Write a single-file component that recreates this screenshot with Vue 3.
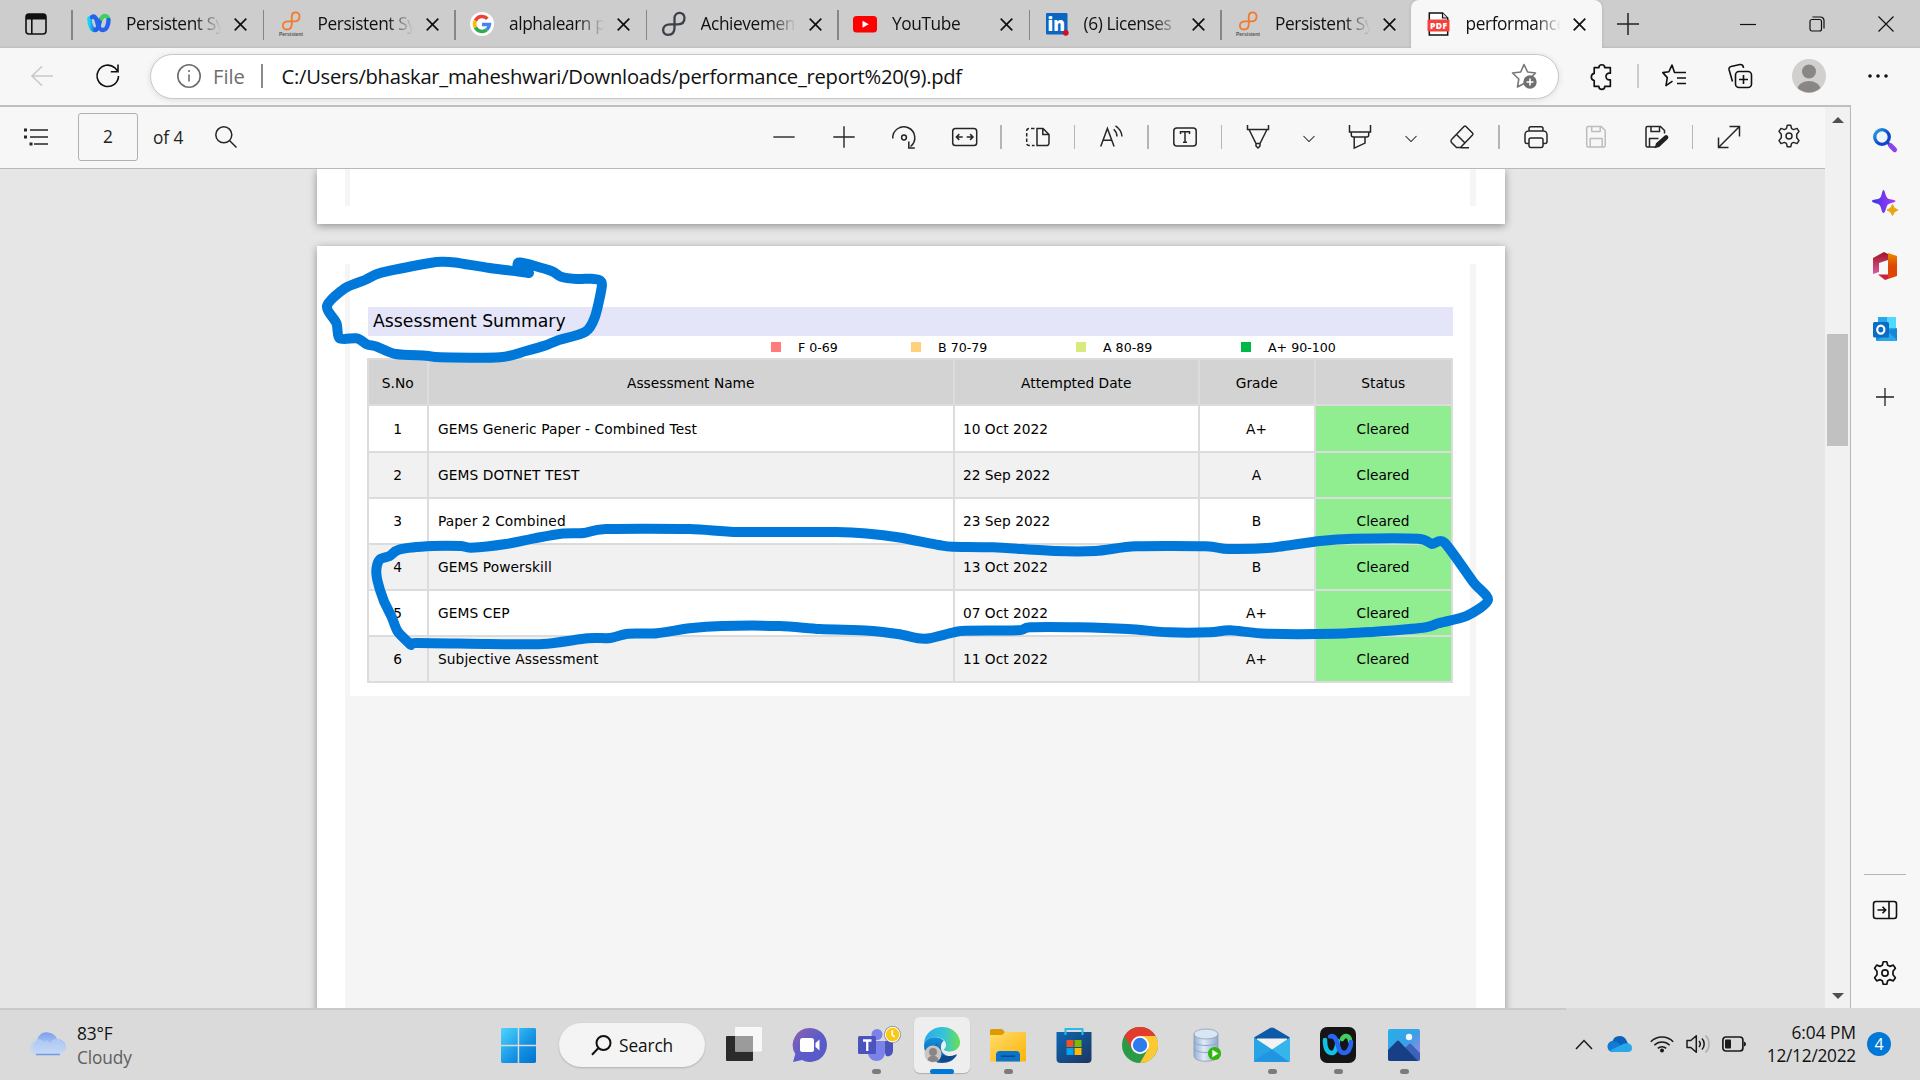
<script setup>
const tabs = [
  { title: 'Persistent Systems', icon: 'webex' },
  { title: 'Persistent Systems', icon: 'persistent' },
  { title: 'alphalearn persistent', icon: 'google' },
  { title: 'Achievements', icon: 'loop' },
  { title: 'YouTube', icon: 'youtube' },
  { title: '(6) Licenses', icon: 'linkedin' },
  { title: 'Persistent Systems', icon: 'persistent' },
  { title: 'performance_report', icon: 'pdf', active: true },
]

const tools = [
  'minus', 'plus', 'rotate', 'fit', '|', 'pageview', '|', 'readaloud', '|', 'addtext', '|',
  'pen', 'v', 'highlighter', 'v', 'eraser', '|', 'print', 'save', 'saveas', '|', 'expand', 'gear',
]

const legend = [
  { label: 'F 0-69', cls: 'red' },
  { label: 'B 70-79', cls: 'amber' },
  { label: 'A 80-89', cls: 'lime' },
  { label: 'A+ 90-100', cls: 'green' },
]

const rows = [
  ['1', 'GEMS Generic Paper - Combined Test', '10 Oct 2022', 'A+'],
  ['2', 'GEMS DOTNET TEST', '22 Sep 2022', 'A'],
  ['3', 'Paper 2 Combined', '23 Sep 2022', 'B'],
  ['4', 'GEMS Powerskill', '13 Oct 2022', 'B'],
  ['5', 'GEMS CEP', '07 Oct 2022', 'A+'],
  ['6', 'Subjective Assessment', '11 Oct 2022', 'A+'],
]

const apps = [
  { icon: 'taskview' },
  { icon: 'chat' },
  { icon: 'teams', open: true },
  { icon: 'edge', focused: true },
  { icon: 'explorer', open: true },
  { icon: 'store' },
  { icon: 'chrome' },
  { icon: 'database' },
  { icon: 'mail', open: true },
  { icon: 'webexapp', open: true },
  { icon: 'photos', open: true },
]

// Smooth pen stroke through a list of points (Catmull-Rom to Bezier)
function ink(points) {
  let d = `M${points[0][0]} ${points[0][1]}`
  for (let i = 0; i < points.length - 1; i++) {
    const a = points[i - 1] || points[i]
    const b = points[i]
    const c = points[i + 1]
    const e = points[i + 2] || c
    const k = 7.5
    d += `C${b[0] + (c[0] - a[0]) / k} ${b[1] + (c[1] - a[1]) / k} ${c[0] - (e[0] - b[0]) / k} ${c[1] - (e[1] - b[1]) / k} ${c[0]} ${c[1]}`
  }
  return d
}

const titleInk = ink([
  [529, 273], [518, 271.5], [489.6, 268], [455, 262.5], [442.7, 261.7], [430, 263], [381.4, 272.7], [365, 280], [344.7, 288.3],
  [327, 306], [336.5, 323.3], [339.5, 338.3], [357, 338.3], [367, 344.3], [377, 346.7], [395.7, 354], [426, 355.7],
  [440.6, 357.3], [499.8, 357.3], [526, 351], [546.7, 345], [557, 340.7], [585.5, 331.7], [595, 316.7],
  [601.8, 286.7], [600, 280.5], [591.6, 278.7], [577, 279], [561, 276.7], [550.8, 270.7], [520, 262.5], [518, 269],
])

const rowsInk = ink([
  [411, 645], [397.8, 631.7], [391.6, 616.7], [383.5, 600], [377.3, 580], [376.5, 568.3], [380, 559.3], [389.6, 556],
  [399.8, 549.3], [432.4, 546], [461, 546], [471.2, 547.7], [506, 544], [534.5, 538.3], [561, 533.7], [583.5, 533],
  [606, 529], [689.6, 529], [738.6, 532], [836.5, 532], [869, 533.7], [897.8, 537.3], [938.6, 545], [952.6, 546.7],
  [993.5, 547.3], [1054.7, 551], [1095.5, 551], [1136, 546.3], [1205.7, 546.3], [1228, 549], [1271, 547.7],
  [1320, 541], [1352.7, 538.7], [1418, 538.7], [1432, 544], [1444.5, 542.7], [1473, 581.7], [1488, 600],
  [1467, 615.7], [1438.4, 623.3], [1426, 627.3], [1389.4, 630.7], [1334.3, 633.7], [1267, 633.7], [1230, 630.3],
  [1209.8, 632.3], [1169, 632.3], [1128, 629], [1079, 627.3], [1030, 627.3], [1018, 630.3], [965, 630.7],
  [952.6, 632.7], [930, 638.3], [918, 638.3], [897.8, 634], [869, 630.7], [820, 629], [779.4, 626], [722, 626],
  [689.6, 628.3], [657, 633.3], [628, 633.7], [610, 638], [587.6, 638.3], [542.7, 644], [489.6, 644], [416, 643], [411, 645],
])

const gearPath = '<path d="M10.3 1.2h3.4l.9 3.4 2 1 3.4-1.2 2 3-2.3 2.9v3.4l2.300 2.900-2 3-3.400-1.200-2 1-.9 3.400h-3.400l-.9-3.400-2-1-3.400 1.200-2-3 2.300-2.900v-3.400l-2.300-2.900 2-3 3.400 1.200 2-1z" stroke-linejoin="round"/><circle cx="12" cy="12" r="3"/>'
const floppy = '<path d="M3.500 1.500h13l4 4v15a1.500 1.500 0 0 1-1.500 1.500h-15.500a1.500 1.500 0 0 1-1.500-1.500v-17.500a1.500 1.500 0 0 1 1.500-1.500zM7 1.500v5h8.500v-5M5.500 22v-8.500h12v8.500" stroke-linejoin="round"/>'
const knot = '<path d="M12.500 6.500C12.500-.8 22.500-.8 22.500 6c0 4-2.500 6.300-6.500 6.300H8C-.8 12.300-.8 22.800 6 22.800c4.500 0 6.500-2.800 6.500-6.800z" fill="none" stroke="COLOR" stroke-width="2.300"/>'

const icons = {
  webex: '<defs><linearGradient id="w1" x1="0" x2="1"><stop offset="0" stop-color="#12d5f2"/><stop offset=".5" stop-color="#1d62e8"/></linearGradient></defs><path d="M2.500 6.500c0 7 2.500 11.500 5.500 11.500s4-6 5-10" fill="none" stroke="url(#w1)" stroke-width="4.600" stroke-linecap="round"/><path d="M14.500 6.500c2-4 6.500-3 7 1" fill="none" stroke="#41cf62" stroke-width="4.200" stroke-linecap="round"/><path d="M5 5c4-2 5 4 6 8 1 3.500 2.500 5 5 5 3.500 0 5.500-5 5.500-10" fill="none" stroke="#2563ef" stroke-width="4.400" stroke-linecap="round"/>',
  persistent: '<g transform="translate(3 -.3) scale(.78)">' + knot.replace('COLOR', '#f27a2a') + '</g><text x="12" y="23.600" font-family="Liberation Sans" font-size="5" font-weight="700" text-anchor="middle" textLength="24" fill="#5a5a5a">Persistent</text>',
  loop: knot.replace('COLOR', '#3d3f4a'),
  google: '<circle cx="12" cy="12" r="12" fill="#fff"/><g fill="none" stroke-width="3.500"><path d="M17.400 6.700A7.400 7.400 0 0 0 5.400 8.700" stroke="#ea4335"/><path d="M5.400 8.700a7.400 7.400 0 0 0 0 6.700" stroke="#fbbc05"/><path d="M5.400 15.400a7.400 7.400 0 0 0 11.400 2.200" stroke="#34a853"/><path d="M16.800 17.600a7.400 7.400 0 0 0 2.600-5H12" stroke="#4285f4"/></g>',
  youtube: '<rect y="4" width="24" height="16.500" rx="3.500" fill="#f00"/><path d="M9.500 8.800l6.300 3.500-6.300 3.500z" fill="#fff"/>',
  linkedin: '<rect x="1" y="1" width="21.500" height="21.500" rx="1" fill="#0a66c2"/><text x="11.300" y="19.200" font-family="Open Sans" font-size="19.500" font-weight="800" text-anchor="middle" textLength="17.500" lengthAdjust="spacingAndGlyphs" fill="#fff">in</text><circle cx="20.800" cy="20.800" r="2.900" fill="#d11124"/>',
  pdf: '<path d="M2.300 1h13.200l5.200 5v17h-18.400z" fill="#fff" stroke="#111" stroke-width="1.500"/><path d="M15.500 1v5h5" fill="#ddd" stroke="#111" stroke-width="1.200"/><rect x=".5" y="7.500" width="22" height="12" rx="1" fill="#f5403c"/><text x="11.500" y="16.700" font-family="Open Sans" font-size="8.500" font-weight="800" text-anchor="middle" textLength="17" fill="#fff">PDF</text>',
  minus: '<path d="M1.300 12h21.400"/>',
  plus: '<path d="M1.300 12h21.400M12 1.300v21.400"/>',
  rotate: '<path d="M.8 13.500A11 11 0 1 1 18.500 21.500M16.800 16.500v6.500h6"/><circle cx="12" cy="12.500" r="2.400"/>',
  fit: '<g transform="translate(.7)"><rect x="0" y="3.500" width="24" height="17" rx="2.800"/><path d="M10 12h-6.200m2.800-2.900-2.900 2.900 2.900 2.900M14 12h6.200m-2.800-2.900 2.900 2.900-2.900 2.900"/></g>',
  pageview: '<path d="M11 3.400v17.200h9.500a2.500 2.500 0 0 0 2.500-2.500v-8.600l-6-6.100zM16.800 3.600v5.900h6"/><path d="M8.500 3.400h-5.500a2.300 2.300 0 0 0-2.300 2.300v12.600a2.300 2.300 0 0 0 2.300 2.300h5.500" stroke-dasharray="3.500 2"/>',
  readaloud: '<g transform="translate(.7)"><path d="M1 21.500l6.700-18 6.700 18M3.300 15.300h8.800M14 4.300a10 10 0 0 1 3.300 7.200M15.800.8a14 14 0 0 1 6.500 10.700"/></g>',
  addtext: '<rect x=".8" y="3" width="22.400" height="18" rx="3"/><path d="M7.500 9v-2.300h9v2.300M12 6.700v10.600M10 17.300h4"/>',
  pen: '<path d="M1.500 0v4.500h21v-4.500M3 4.500l7 14h4l7-14M10 18.500v2.500l2 2 2-2v-2.500"/>',
  highlighter: '<path d="M1.500 0v7h21v-7M3.300 7v3a2 2 0 0 0 2 2h13.400a2 2 0 0 0 2-2v-3M6.200 12.200v10.900l10.800-5v-5.900"/>',
  v: '<path d="M6.500 11l5.500 5.500 5.500-5.500" stroke-width="1.050"/>',
  eraser: '<path d="M2 14l12-12.500a1.500 1.500 0 0 1 2 0l6.500 6.500a1.500 1.500 0 0 1 0 2l-12 12.500h-4l-4.500-4.500a2.500 2.500 0 0 1 0-4zM6.500 9.500l8.500 8.500M10.500 22.700h8.500" stroke-linejoin="round"/>',
  print: '<path d="M5 6.500v-2.700a2 2 0 0 1 2-2h10a2 2 0 0 1 2 2v2.700M5 18.500h-2a2 2 0 0 1-2-2v-7a3.500 3.500 0 0 1 3.500-3.500h15a3.500 3.500 0 0 1 3.500 3.500v7a2 2 0 0 1-2 2h-2"/><rect x="5" y="13" width="14" height="9.500" rx="2"/>',
  save: '<g transform="translate(.7)">' + floppy + '</g>',
  saveas: '<path d="M11 22h-7.500a1.500 1.500 0 0 1-1.500-1.500v-17.500a1.500 1.500 0 0 1 1.500-1.500h13l4 4v3M7 1.500v5h8.500v-5M5.500 22v-8.500h9"/><path d="M10.500 23.300l1.500-5 8.500-7.600a2.200 2.200 0 0 1 3.200 3.200l-8.500 8z" fill="#222" stroke="none"/>',
  expand: '<path d="M1.500 22.500l21-21M12.500 1.500h10v10M1.500 12.500v10h10"/>',
  gear: gearPath,
  taskview: '<rect y="9" width="27" height="25" rx="1" fill="#2b2b2b"/><rect x="9" width="27" height="24.500" rx="1" fill="#fbfbfb" opacity=".9"/><path d="M9 9h18v15.500h-18z" fill="#9b9b9b"/>',
  chat: '<defs><linearGradient id="c1" x1="0" y1="0" x2="1" y2="1"><stop offset="0" stop-color="#9461a8"/><stop offset=".5" stop-color="#5b5cc9"/><stop offset="1" stop-color="#5459c7"/></linearGradient></defs><path d="M18 1a17 17 0 1 1-8 32l-9 2 2.300-8a17 17 0 0 1 14.700-26z" fill="url(#c1)"/><rect x="8" y="11" width="14" height="14" rx="2.500" fill="#fff"/><path d="M23.500 16l4-3.500v11l-4-3.500z" fill="#fff"/>',
  teams: '<path d="M23 14h12v9c0 5-3 7-7 6z" fill="#4b53bc"/><circle cx="19" cy="7.500" r="5.500" fill="#7b83eb"/><path d="M10 14h17v11c0 12-17 12-17 0z" fill="#7b83eb"/><rect y="9" width="18" height="18" rx="1.500" fill="#4b53bc"/><path d="M5 13.500h8.500M9.250 13.500v10.500" stroke="#fff" stroke-width="2.300"/><circle cx="34.500" cy="7.500" r="8.500" fill="#8a8886"/><circle cx="34.500" cy="7.500" r="7.700" fill="#fff"/><circle cx="34.500" cy="7.500" r="6.700" fill="#fbc914"/><path d="M34.200 3.300v4.700l2.500 1.800" fill="none" stroke="#fff" stroke-width="1.600"/>',
  edge: '<defs><linearGradient id="e1"><stop offset="0" stop-color="#2aa9e8"/><stop offset=".55" stop-color="#35c4d7"/><stop offset="1" stop-color="#6be04f"/></linearGradient><linearGradient id="e2" x1="0" y1="0" x2="0" y2="1"><stop offset="0" stop-color="#1591dd"/><stop offset="1" stop-color="#0c59a4"/></linearGradient></defs><path d="M0 18c-.2 10 8 18 18 18 7 0 12-3 15-8-10 4-17-2-16-9 0-3 2-5 3-5-4-6-19-5-20 4z" fill="url(#e2)"/><path d="M13 16c-4 10 8 17 20 11-3 5-8 8-12 8-9 0-14-12-8-19z" fill="#114a8b"/><path d="M0 17C1-4 32-6 36 14c1 9-9 13-16 9-1-1 2-1 2-5 0-9-17-11-22-1z" fill="url(#e1)"/><circle cx="9" cy="27" r="8.500" fill="#c8c6c4"/><circle cx="9" cy="25" r="4" fill="#8a8684"/><path d="M3.500 33a5.700 5.700 0 0 1 11 0 9 9 0 0 1-11 0z" fill="#8a8684"/>',
  explorer: '<defs><linearGradient id="x1" x1="0" y1="0" x2="1" y2="1"><stop offset="0" stop-color="#ffdc6e"/><stop offset="1" stop-color="#fbb506"/></linearGradient></defs><path d="M0 3.500q0-1.500 1.500-1.500h10.500l3 3h21v8h-36z" fill="#dc9a05"/><path d="M0 8h12l3-3h21v29.500h-36z" fill="url(#x1)"/><path d="M6 34.500v-6.500a4 4 0 0 1 4-4h16a4 4 0 0 1 4 4v6.500z" fill="#0c73cb"/><path d="M11 29.200h14" stroke="#064a8b" stroke-width="1.500"/>',
  store: '<defs><linearGradient id="s1" x1="0" y1="0" x2="1" y2="1"><stop offset="0" stop-color="#0b68b5"/><stop offset="1" stop-color="#1d355f"/></linearGradient></defs><path d="M9.500 6v-4h17v4" fill="none" stroke="#2bbbe9" stroke-width="2"/><path d="M.5 5h35v27a4 4 0 0 1-4 4h-27a4 4 0 0 1-4-4z" fill="url(#s1)"/><path d="M9.500 5v3M26.500 5v3" stroke="#2bbbe9" stroke-width="2"/><path d="M10.500 13h7v7h-7z" fill="#f25022"/><path d="M18.500 13h7v7h-7z" fill="#7fba00"/><path d="M10.500 21h7v7h-7z" fill="#00a4ef"/><path d="M18.500 21h7v7h-7z" fill="#ffb900"/>',
  chrome: '<circle cx="18" cy="18" r="18" fill="#2b9a46"/><path d="M2.400 9a18 18 0 0 1 31.200 0h-15.600l-7.800 13.500z" fill="#e33b2e"/><path d="M18 9h15.600a18 18 0 0 1-15.600 27l7.800-13.500z" fill="#fcc934"/><circle cx="18" cy="18" r="9" fill="#fff"/><circle cx="18" cy="18" r="7.200" fill="#2f7bed"/>',
  database: '<defs><linearGradient id="d1"><stop offset="0" stop-color="#93afd3"/><stop offset=".4" stop-color="#e0eaf7"/><stop offset="1" stop-color="#8fabd0"/></linearGradient></defs><path d="M6 7v22c0 7 24 7 24 0v-22z" fill="url(#d1)" stroke="#8f9db1" stroke-width=".8"/><path d="M6 14c0 6 24 6 24 0M6 21c0 6 24 6 24 0" fill="none" stroke="#8aa6cc"/><ellipse cx="18" cy="7" rx="12" ry="5" fill="#d9e6f5" stroke="#8f9db1" stroke-width=".8"/><circle cx="26.500" cy="26.500" r="6.600" fill="#35b512"/><path d="M24.300 22.800l6 3.700-6 3.700z" fill="#fff"/>',
  mail: '<path d="M0 10.500l16-9.500a4 4 0 0 1 4 0l16 9.500-4 5h-28z" fill="#0d5ba8"/><path d="M3 11.500h30v6l-15 10-15-10z" fill="#f3f3f3"/><path d="M0 10.500l18 12 18-12v23.500a1 1 0 0 1-1 1h-34a1 1 0 0 1-1-1z" fill="#36b5ec"/><path d="M0 11v23.500l1 .5h34l-17-12.500z" fill="#28a3e6"/><path d="M18 22.500l17 12.500h-17l-18-1z" fill="#1e8fdd" opacity=".7"/>',
  webexapp: '<rect width="36" height="36" rx="7" fill="#151515"/><g fill="none" stroke-linecap="round" stroke-width="4.500"><path d="M22 12c3-5 8-3 8 2" stroke="#43cf60"/><path d="M5 13c0 9 3 13 7 13s5-7 6-12" stroke="#0fc3e6"/><path d="M10 9.500c5-2 7 5 8 9 1 5 3 7.500 6 7.500 4 0 7-5 7-11" stroke="#2766f3"/></g>',
  photos: '<defs><linearGradient id="p1" y2="1"><stop offset="0" stop-color="#25b0ea"/><stop offset=".5" stop-color="#39a0e6"/><stop offset="1" stop-color="#c07ddb"/></linearGradient></defs><rect x="2" y="2" width="32" height="32" rx="2" fill="url(#p1)"/><path d="M16 24l7-7q1-1 2 0l9 9v6a2 2 0 0 1-2 2h-14z" fill="#3a64b8"/><path d="M2 23l9-9q1-1 2 0l19 20h-28a2 2 0 0 1-2-2z" fill="#173f85"/><circle cx="23" cy="10" r="3.200" fill="#f1f7fc"/>',
}
</script>

<template>
  <div class="screen">
    <div class="tabstrip">
      <div class="tabactions">
        <svg width="22" height="22" viewBox="0 0 22 22"><rect x="1" y="1" width="20" height="20" rx="3" fill="none" stroke="#111" stroke-width="1.600" /><path d="M1 4a3 3 0 0 1 3-3h14a3 3 0 0 1 3 3v2.500h-20zM6 6h1.600v15h-1.600z" fill="#111" /></svg>
      </div>
      <div v-for="(tab, i) in tabs" :key="i" class="tab" :class="{ active: tab.active }">
        <svg class="favicon" viewBox="0 0 24 24" v-html="icons[tab.icon]" />
        <span class="tabtitle">{{ tab.title }}</span>
        <svg class="close" viewBox="0 0 13 13"><path d="M.7.7l11.600 11.600M12.300.7L.7 12.300" /></svg>
      </div>
      <svg class="newtab" viewBox="0 0 22 22"><path d="M0 11h22M11 0v22" /></svg>
      <div class="winbtns">
        <svg viewBox="0 0 16 16"><path d="M0 8.500h16" /></svg>
        <svg viewBox="0 0 16 16"><rect x="1" y="3.500" width="11.500" height="11.500" rx="2" /><path d="M3.500 1h8a3.500 3.500 0 0 1 3.500 3.500v8" /></svg>
        <svg viewBox="0 0 16 16"><path d="M.5.5l15 15M15.500.5l-15 15" /></svg>
      </div>
    </div>

    <div class="navbar">
      <svg class="back" viewBox="0 0 24 24"><path d="M24 12h-23M12 1.500l-11 10.500 11 10.500" /></svg>
      <svg class="reload" viewBox="0 0 24 24"><path d="M22.500 12a10.700 10.700 0 1 1-3.600-8.200l2.600 3.200M22 .5v7.200h-7.200" /></svg>
      <div class="address">
        <svg class="info" viewBox="0 0 24 24"><circle cx="12" cy="12" r="11.200" /><path d="M12 10.500v7M12 6v2" /></svg>
        <span class="scheme">File</span>
        <i class="bar" />
        <span class="url">C:/Users/bhaskar_maheshwari/Downloads/performance_report%20(9).pdf</span>
        <svg class="star" viewBox="0 0 26 26"><path d="M13 20.500l-6.500 3.500 1.300-8-6.300-6 8.200-1 3.300-7.500 3.600 7.500 7.900 1-3.500 3.500" stroke-linejoin="round" /><circle cx="19" cy="19" r="6.700" fill="#6e6e6e" stroke="none" /><path d="M15.500 19h7M19 15.500v7" stroke="#fff" /></svg>
      </div>
      <svg class="ext" viewBox="0 0 24 24"><path d="M5 3.500h4.500a2.800 2.800 0 0 1 5.600 0h5.400v5.300h-1a3.200 3.200 0 0 0 0 6.400h1v6.300h-5.400a2.800 2.800 0 0 1-5.600 0h-4.500v-5.500a3.600 3.600 0 0 1 0-7z" stroke-linejoin="round" /></svg>
      <i class="navsep" />
      <svg class="favs" viewBox="0 0 24 24"><path d="M12.500 9l-2.500-7.500-3.200 6.800-6 .8 4.500 5-1.300 8 6.500-4.500M12 9h12M15 14.500h9M15 20h9" transform="translate(0 -.5)" stroke-linejoin="round" /></svg>
      <svg class="coll" viewBox="0 0 24 24"><rect x="7.500" y="7.500" width="16" height="16" rx="3.500" /><path d="M15.500 11v9M11 15.500h9M4.500 17.500l-3.500-12a2.500 2.500 0 0 1 2-3l9-2q3-.5 3.500 3.500" /></svg>
      <svg class="avatar" viewBox="0 0 34 34"><circle cx="17" cy="17" r="17" fill="#d2d0ce" /><circle cx="17" cy="12.500" r="7" fill="#8a8684" /><path d="M5.500 29a11.700 8.500 0 0 1 23 0 17 17 0 0 1-23 0z" fill="#8a8684" /></svg>
      <svg class="dots" viewBox="0 0 20 4"><circle cx="2" cy="2" r="1.800" /><circle cx="10" cy="2" r="1.800" /><circle cx="18" cy="2" r="1.800" /></svg>
    </div>

    <div class="main">
      <div class="viewer">
        <div class="pdfbar">
          <svg class="toc" viewBox="0 0 24 18"><path d="M6 2h18M6 9h18M10 16h14" /><path d="M0 2h3M0 9h3M5.500 16h3" stroke-width="3" /></svg>
          <div class="pagebox">2</div>
          <span class="of">of 4</span>
          <svg class="find" viewBox="0 0 22 22"><circle cx="8.800" cy="8.800" r="8" /><path d="M14.500 14.500l7 7" /></svg>
          <div class="tools">
            <template v-for="(t, i) in tools" :key="i">
              <i v-if="t === '|'" class="toolsep" />
              <svg v-else class="tool" :class="'t-' + t" viewBox="0 0 24 24" v-html="icons[t]" />
            </template>
          </div>
        </div>
        <div class="canvas">
          <div class="page first"><div class="rail" /></div>
          <div class="page second">
            <div class="sheet">
              <div class="report">
                <h1>Assessment Summary</h1>
                <div class="legend">
                  <span v-for="l in legend" :key="l.label" :class="l.cls"><i />{{ l.label }}</span>
                </div>
                <div class="table">
                  <div class="th">S.No</div>
                  <div class="th">Assessment Name</div>
                  <div class="th">Attempted Date</div>
                  <div class="th">Grade</div>
                  <div class="th">Status</div>
                  <template v-for="(r, i) in rows" :key="r[0]">
                    <div class="td mid" :class="{ alt: i % 2, lead: !i }">{{ r[0] }}</div>
                    <div class="td name" :class="{ alt: i % 2, lead: !i }">{{ r[1] }}</div>
                    <div class="td date" :class="{ alt: i % 2, lead: !i }">{{ r[2] }}</div>
                    <div class="td mid" :class="{ alt: i % 2, lead: !i }">{{ r[3] }}</div>
                    <div class="td mid ok" :class="{ lead: !i }">Cleared</div>
                  </template>
                </div>
              </div>
            </div>
          </div>
        </div>
      </div>
      <div class="scroll">
        <svg viewBox="0 0 12 6"><path d="M0 6l6-6 6 6z" /></svg>
        <div class="thumb" />
        <svg class="down" viewBox="0 0 12 6"><path d="M0 0l6 6 6-6z" /></svg>
      </div>
      <div class="side">
        <svg width="26" height="26" viewBox="0 0 26 26"><defs><linearGradient id="q1" x1="0" y1="0" x2="1" y2="1"><stop offset="0" stop-color="#2aa7dc" /><stop offset=".6" stop-color="#0c47cf" /></linearGradient></defs><path d="M15.500 15.500l3 3" stroke="#444c66" stroke-width="3" /><path d="M18.500 18.500l4.200 4.200" stroke="#8844f2" stroke-width="4.800" stroke-linecap="round" /><circle cx="10" cy="10" r="7.300" fill="#eef5fb" stroke="url(#q1)" stroke-width="3.300" /></svg>
        <svg class="s2" width="26" height="26" viewBox="0 0 26 26"><defs><linearGradient id="q2"><stop offset="0" stop-color="#3535e8" /><stop offset="1" stop-color="#b23af6" /></linearGradient></defs><path d="M11.500 0c1.500 0 2 7 4.500 8.500s7.500 1 7.500 2.500-6.500 2-8 4-2 8-4 8-2-6-4-8-7.500-2-7.500-4 6-1 8-3 2-8 3.500-8z" fill="url(#q2)" /><path d="M20.500 14.500q1 4.500 5.500 5.500-4.500 1-5.500 5.500-1-4.500-5.500-5.500 4.500-1 5.500-5.500z" fill="#e8a50c" stroke="#e8a50c" /></svg>
        <svg class="s3" width="26" height="28" viewBox="0 0 26 28"><defs><linearGradient id="q3" y2="1" x2="0"><stop offset="0" stop-color="#a1131c" /><stop offset="1" stop-color="#d85ba5" /></linearGradient><linearGradient id="q4" y2="1" x2="0"><stop offset="0" stop-color="#ef8b00" /><stop offset=".5" stop-color="#dc4505" /></linearGradient></defs><path d="M1 6l11-6 4 2v6l-9 3v9l-6 2z" fill="url(#q3)" /><path d="M16 1l9 3v20l-9 3z" fill="url(#q4)" /><path d="M6 22.500h10v4.500l-3 1z" fill="#d01f3c" /></svg>
        <svg class="s4" width="26" height="26" viewBox="0 0 26 26"><path d="M6 1h18v14h-18z" fill="#28a8ea" /><path d="M15 1h9v11h-9z" fill="#50d9ff" /><path d="M4 13l21 0v11a1 1 0 0 1-1 1h-19a1 1 0 0 1-1-1z" fill="#1490df" /><path d="M4 25l21-13v13z" fill="#28a8ea" /><path d="M17 16.500l8-4.500v12z" fill="#0f6fc2" opacity=".6" /><rect x="1" y="6" width="16" height="15.500" rx="1.500" fill="#0a6cc4" /><ellipse cx="8.800" cy="13.600" rx="3.600" ry="4" fill="none" stroke="#fff" stroke-width="2.200" /></svg>
        <svg class="s5" width="20" height="20" viewBox="0 0 20 20"><path d="M1 10h18M10 1v18" stroke="#222" stroke-width="1.300" /></svg>
        <i class="rule" />
        <svg class="line" width="26" height="20" viewBox="0 0 26 20"><rect x="1.500" y="1.500" width="23" height="17" rx="2.500" /><path d="M17 1.500v17M5.500 10h8M10.500 6.800l3.200 3.200-3.200 3.200" /></svg>
        <svg class="line s7" width="26" height="26" viewBox="-.5 -.5 25 25" v-html="icons.gear" />
      </div>
    </div>

    <div class="taskbar">
      <div class="weather">
        <svg width="36" height="24" viewBox="0 0 36 24"><defs><linearGradient id="k1" y2="1" x2="0"><stop offset="0" stop-color="#7ba0ec" /><stop offset="1" stop-color="#d5e3f8" /></linearGradient></defs><path d="M8 23a8 8 0 0 1-1-14.500C8 3 13-.500 18 .500c5 .5 8 3.500 9 6.500 5 0 9 3.500 9 8.500s-4 7.500-8 7.500z" fill="url(#k1)" /><path d="M8 23a8 8 0 1 1 6-13q3-4 6 1a8 8 0 1 1 8 12z" fill="#bcd3f5" opacity=".6" /><path d="M6 22.500h24" stroke="#7398e3" stroke-width="1.500" /></svg>
        <div><b>83°F</b><span>Cloudy</span></div>
      </div>
      <svg class="start" viewBox="0 0 36 36"><defs><linearGradient id="z1" x1="0" y1="0" x2="1" y2="1"><stop offset="0" stop-color="#4fd5fd" /><stop offset=".6" stop-color="#1391e2" /><stop offset="1" stop-color="#0073d1" /></linearGradient></defs><path d="M1.500 0h15.700v17.200h-17.200v-15.700a1.500 1.500 0 0 1 1.500-1.500zM18.700 0h15.800a1.500 1.500 0 0 1 1.500 1.500v15.700h-17.300zM0 18.800h17.200v17.200h-15.700a1.500 1.500 0 0 1-1.500-1.500zM18.700 18.800h17.300v15.700a1.500 1.500 0 0 1-1.500 1.500h-15.800z" fill="url(#z1)" /></svg>
      <div class="searchpill">
        <svg width="21" height="21" viewBox="0 0 21 21"><circle cx="12.500" cy="8" r="7" /><path d="M7.500 13l-6.500 6.800" /></svg>
        Search
      </div>
      <div class="apps">
        <div v-for="a in apps" :key="a.icon" class="app" :class="{ open: a.open, focused: a.focused }">
          <div class="tile"><svg viewBox="0 0 36 36" v-html="icons[a.icon]" /></div>
        </div>
      </div>
      <div class="tray">
        <svg class="up" width="18" height="11" viewBox="0 0 18 11"><path d="M1 10l8-8.500 8 8.500" /></svg>
        <svg class="cloud" width="24" height="16" viewBox="0 0 24 16"><path d="M5 15a5 5 0 0 1-.5-10 7.500 7.500 0 0 1 14-.5l3 6-8 5z" fill="#0a62bb" stroke="none" /><path d="M5 16a5 5 0 0 1-.5-10.500q4-1 7 2.500l3 6z" fill="#0f7bd6" stroke="none" /><path d="M2 14.500l14-7q8-1 8 4.500 0 4-4 4h-15q-2 0-3-1.500z" fill="#2aa6ea" stroke="none" /></svg>
        <svg class="wifi" width="24" height="18" viewBox="0 0 24 18"><path d="M.8 6.800a15.500 15.500 0 0 1 22.400 0M4.300 10.200a11 11 0 0 1 15.400 0M7.800 13.400a6 6 0 0 1 8.400 0" /><circle cx="12" cy="15.600" r="2" fill="#1a1a1a" stroke="none" /></svg>
        <svg class="vol" width="24" height="20" viewBox="0 0 24 20"><path d="M1 6.500h3.800l5.500-4.800v16.600l-5.500-4.800h-3.800zM13 7a4.500 4.500 0 0 1 0 6M16 4.500a8 8 0 0 1 0 11" stroke-linejoin="round" /><path d="M19.500 1.500a12 12 0 0 1 0 17" stroke="#a9a9a9" /></svg>
        <svg class="bat" width="24" height="16" viewBox="0 0 24 16"><rect x=".9" y="1" width="20" height="14" rx="3" stroke-width="1.700" /><rect x="3" y="3.500" width="6" height="9" rx="1" fill="#1a1a1a" stroke="none" /><path d="M22 5.500q2 .5 2 2.500t-2 2.500z" fill="#1a1a1a" stroke="none" /></svg>
        <div class="clock"><span class="time">6:04 PM</span><span>12/12/2022</span></div>
        <div class="badge">4</div>
      </div>
    </div>

    <svg class="ink" width="1920" height="1080" viewBox="0 0 1920 1080"><path :d="titleInk" /><path :d="rowsInk" /></svg>
  </div>
</template>

<style>
body { overflow: hidden; }
</style>

<style scoped>
* { box-sizing: border-box; }
svg { flex: none; display: block; overflow: visible; }
i { flex: none; display: block; }
.screen { position: relative; width: 1920px; height: 1080px; display: flex; flex-direction: column; overflow: hidden; background: #f7f7f7; font-family: "Open Sans", "Noto Sans", sans-serif; color: #111; }

.tabstrip { height: 48px; flex: none; display: flex; align-items: center; background: #cdcdcd; box-shadow: inset 0 -2px 2px -1px #bcbcbc; }
.tabactions { width: 71px; padding-left: 25px; }
.tab { position: relative; width: 191.500px; height: 48px; display: flex; align-items: center; padding-left: 16px; }
.tab::before { content: ""; position: absolute; left: 0; top: 10px; height: 30px; width: 1.500px; background: #868686; }
.tab.active { margin-left: -1px; background: #f7f7f7; border-radius: 8px 8px 0 0; box-shadow: 0 0 3px #aaa; clip-path: inset(-2px -4px 0 -4px); }
.tab.active::before { display: none; }
.favicon { width: 24px; height: 24px; }
.tabtitle { width: 95px; margin-left: 15px; overflow: hidden; white-space: nowrap; font-size: 17.300px; letter-spacing: -.4px; line-height: 28px; -webkit-mask-image: linear-gradient(90deg, #000 72%, transparent 100%); mask-image: linear-gradient(90deg, #000 72%, transparent 100%); }
.close { width: 13px; height: 13px; margin-left: 13px; stroke: #111; stroke-width: 1.700; }
.active .close { margin-left: 12px; }
.newtab { width: 22px; height: 22px; margin-left: 15px; stroke: #222; stroke-width: 1.500; }
.winbtns { display: flex; gap: 53px; margin-left: auto; margin-right: 26.500px; }
.winbtns svg { width: 16px; height: 16px; fill: none; stroke: #111; stroke-width: 1.200; }

.navbar { height: 57px; flex: none; display: flex; align-items: center; padding-bottom: 1px; background: #f7f7f7; fill: none; stroke: #111; stroke-width: 1.600; }
.navbar svg { fill: none; }
.back { width: 24px; height: 22px; margin-left: 30px; stroke: #c9c9c9; }
.reload { width: 24px; height: 24px; margin-left: 42px; }
.address { width: 1409px; height: 45px; margin-left: 30px; display: flex; align-items: center; padding-left: 26px; background: #fff; border: 1.500px solid #c8c8c8; border-radius: 23px; box-shadow: 0 1px 6px #0000001c; font-size: 20.200px; }
.info { width: 24px; height: 24px; stroke: #6e6e6e; }
.scheme { width: 32px; margin-left: 12px; color: #6e6e6e; }
.bar { width: 1.500px; height: 24px; margin-left: 16px; background: #8b8b8b; }
.url { width: 1220px; margin-left: 19px; letter-spacing: -.26px; white-space: nowrap; }
.star { width: 26px; height: 26px; margin-left: 9px; stroke: #777; }
.ext { width: 25px; height: 25px; margin-left: 30px; }
.navsep { width: 1.500px; height: 24px; margin-left: 23px; background: #ccc; }
.favs { width: 24px; height: 24px; margin-left: 23px; }
.coll { width: 24px; height: 24px; margin-left: 42px; }
.avatar { width: 34px; height: 34px; margin-left: 40px; stroke: none; }
.navbar .dots { width: 20px; height: 4px; margin-left: 42px; fill: #111; stroke: none; }

.main { height: 903px; flex: none; display: flex; }
.viewer { width: 1825px; display: flex; flex-direction: column; border-top: 2px solid #bfbfbf; }
.pdfbar { height: 62px; flex: none; display: flex; align-items: center; padding-bottom: 1px; background: #f7f7f7; border-bottom: 1px solid #b9b9b9; font-size: 17.300px; fill: none; stroke: #262626; stroke-width: 1.500; }
.toc { width: 24px; height: 18px; margin-left: 24px; }
.pagebox { width: 60px; height: 48px; margin-left: 30px; border: 1px solid #b0b0b0; border-radius: 3px; text-align: center; line-height: 46px; color: #222; }
.of { width: 62px; padding-left: 15px; letter-spacing: -.1px; color: #222; }
.find { width: 22px; height: 22px; margin-left: 15px; }
.tools { display: flex; align-items: center; margin-left: auto; margin-right: 6px; }
.tool { width: 24px; height: 24px; margin: 0 18px; }
.t-v { margin: 0 9px; }
.t-minus, .t-plus { stroke-width: 1.400; }
.t-save { stroke: #bdbdbd; }
.t-gear { transform: translateY(-1px); }
.toolsep { width: 1.500px; height: 24px; margin: 0 6px; background: #b5b5b5; }
.canvas { flex: 1; min-height: 0; overflow: hidden; display: flex; flex-direction: column; align-items: flex-start; gap: 22px; padding-left: 317px; background: #e6e6e6; }
.page { width: 1188px; flex: none; background: #fff; box-shadow: 0 2px 8px #00000060; }
.first { height: 55px; }
.rail { width: 1131px; height: 37px; margin-left: 28px; border: solid #f5f5f5; border-width: 0 6px 0 5px; }
.second { height: 900px; padding: 18px 29px 0 28px; }
.sheet { height: 882px; background: #f5f5f5; padding: 0 6px 0 5px; }
.report { height: 432px; padding: 43px 17px 0; background: #fff; font-family: "DejaVu Sans", sans-serif; color: #000; }
h1 { height: 29px; margin: 0 0 0 1px; padding-left: 5px; background: #e5e5fa; font-size: 17.300px; font-weight: 400; line-height: 28px; }
.legend { height: 22px; display: flex; padding-left: 404px; font-size: 12.600px; line-height: 23px; }
.legend span { display: flex; align-items: center; width: 165px; white-space: nowrap; }
.legend .red { width: 140px; }
.legend i { width: 10px; height: 10px; margin-right: 17px; background: #00b84a; }
.legend .red i { background: #ff7b7b; }
.legend .amber i { background: #ffd17a; }
.legend .lime i { background: #d6ea80; }
.table { display: grid; grid-template-columns: 58px 524px 243px 114px 135px; grid-template-rows: 44px 45px; grid-auto-rows: 44px; gap: 2px; padding: 2px; width: 1086px; background: #dcdcdc; font-size: 13.750px; line-height: 44px; }
.table > div { height: 100%; }
.th { background: #d3d3d3; text-align: center; text-indent: -.5px; line-height: 47px; }
.td { background: #fff; padding-left: 9px; white-space: nowrap; }
.td.name { letter-spacing: .09px; }
.td.date { padding-left: 8px; }
.td.mid { padding: 0 1px 0 0; text-align: center; }
.td.alt { background: #f1f1f1; }
.td.lead { line-height: 46px; }
.td.ok { background: #90ee90; }

.scroll { width: 25px; display: flex; flex-direction: column; align-items: center; padding: 10px 0 9px; background: #f1f1f1; border-top: 2px solid #bfbfbf; fill: #4f4f4f; }
.scroll svg { width: 12px; height: 6px; }
.thumb { width: 21px; height: 112px; margin-top: 211px; background: #c1c1c1; }
.scroll .down { margin-top: auto; }
.side { width: 70px; display: flex; flex-direction: column; align-items: center; padding: 22px 1px 22px 0; border-left: 1px solid #b9b9b9; background: #f7f7f7; }
.s2 { margin-top: 37px; }
.s3 { margin-top: 36px; }
.s4 { margin-top: 36px; }
.s5 { margin-top: 45px; }
.rule { width: 42px; height: 1px; margin-top: auto; background: #b5b5b5; }
.line { margin-top: 25px; fill: none; stroke: #111; stroke-width: 1.600; }
.s7 { margin-top: 40px; }

.taskbar { height: 72px; flex: none; display: flex; align-items: center; background: #dadada; background-image: linear-gradient(#cacaca, #cacaca); background-size: 1566px 2px; background-repeat: no-repeat; font-size: 17.300px; }
.weather { width: 501px; display: flex; align-items: center; padding-left: 30px; gap: 11px; }
.weather > div { padding-top: 3px; }
.weather b, .weather span { display: block; font-weight: 400; line-height: 24px; letter-spacing: -.1px; }
.weather span { color: #5e5e5e; }
.start { width: 35px; height: 35px; margin-top: 2px; }
.searchpill { width: 146px; height: 44px; margin-left: 23px; margin-top: 2px; padding-left: 32px; display: flex; align-items: center; gap: 7px; border-radius: 22px; background: #f4f4f4; box-shadow: 0 1px 2px #00000030; letter-spacing: -.1px; }
.searchpill svg { fill: none; stroke: #111; stroke-width: 2; }
.apps { display: flex; margin-left: 6px; }
.app { position: relative; width: 66px; height: 72px; display: flex; justify-content: center; padding-top: 9px; }
.tile { width: 56px; height: 56px; display: flex; align-items: center; justify-content: center; border-radius: 6px; }
.tile svg { width: 36px; height: 36px; }
.focused .tile { background: #eeeeee; box-shadow: 0 1px 1px #0003; }
.open::after, .focused::after { content: ""; position: absolute; left: 28.500px; bottom: 6px; width: 9px; height: 5px; border-radius: 3px; background: #7b7b7b; }
.focused::after { left: 21px; width: 24px; background: #0078d7; }
.tray { display: flex; align-items: center; margin-left: auto; margin-right: 29px; fill: none; stroke: #1a1a1a; stroke-width: 1.500; }
.cloud { margin-left: 15px; }
.wifi { margin-left: 18px; }
.vol { margin-left: 12px; }
.bat { margin-left: 12px; }
.clock { width: 110px; display: flex; flex-direction: column; align-items: flex-end; line-height: 23px; letter-spacing: -.25px; }
.time { letter-spacing: 0; }
.badge { width: 24px; height: 24px; margin-left: 11px; border-radius: 50%; background: #0078d7; color: #fff; font-size: 16px; line-height: 24px; text-align: center; }
.ink { position: absolute; left: 0; top: 0; fill: none; stroke: #0078d9; stroke-width: 10px; stroke-linecap: round; stroke-linejoin: round; pointer-events: none; }
</style>
